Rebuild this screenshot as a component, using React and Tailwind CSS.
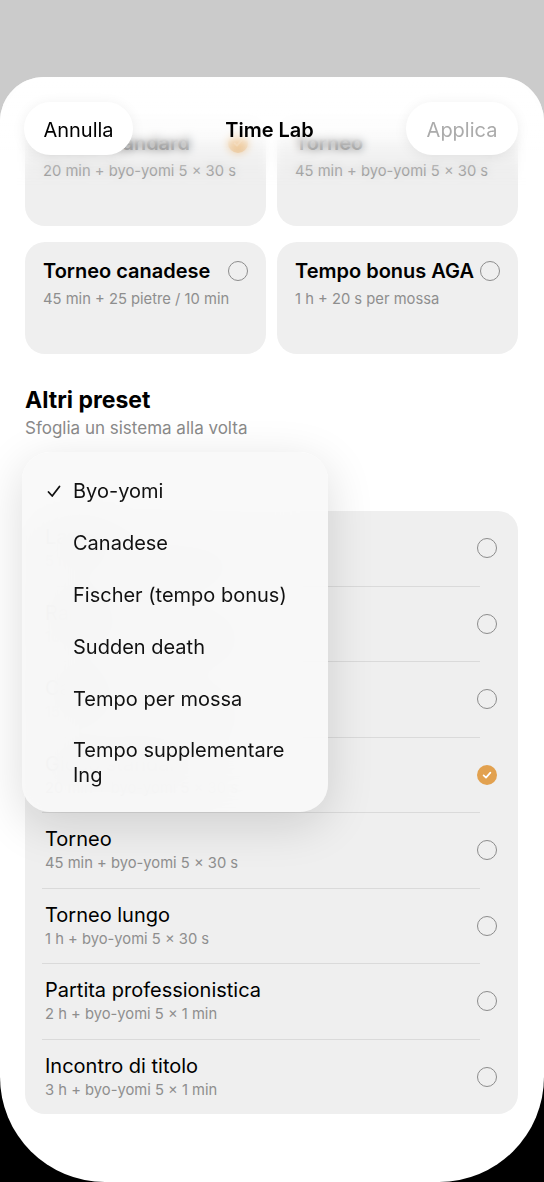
import React from "react";

function Radio({ on }) {
  if (on) {
    return (
      <div className="w-[20px] h-[20px] rounded-full bg-[#e2a14f] flex items-center justify-center shrink-0">
        <svg width="12" height="12" viewBox="0 0 12 12" fill="none">
          <path d="M2.6 6.3 L5 8.6 L9.4 3.6" stroke="white" strokeWidth="1.7" strokeLinecap="round" strokeLinejoin="round" />
        </svg>
      </div>
    );
  }
  return <div className="w-[20px] h-[20px] rounded-full border-[1.5px] border-[#8c8c8c] shrink-0" />;
}

function Card({ title, sub, on }) {
  return (
    <div className="h-[112px] rounded-[20px] bg-[#efefef] pl-[18px] pr-[18px] pt-[17px]">
      <div className="flex items-center justify-between h-[24px]">
        <div className="text-[20px] leading-[24px] font-semibold text-black">{title}</div>
        <Radio on={on} />
      </div>
      <div className="mt-[6px] text-[14.75px] leading-[20px] text-[#8e8e8e]">{sub}</div>
    </div>
  );
}

const rows = [
  ["Lampo", "5 min + byo-yomi 3 × 10 s", false],
  ["Rapida", "10 min + byo-yomi 3 × 20 s", false],
  ["Casual", "15 min + byo-yomi 5 × 20 s", false],
  ["Gioco standard", "20 min + byo-yomi 5 × 30 s", true],
  ["Torneo", "45 min + byo-yomi 5 × 30 s", false],
  ["Torneo lungo", "1 h + byo-yomi 5 × 30 s", false],
  ["Partita professionistica", "2 h + byo-yomi 5 × 1 min", false],
  ["Incontro di titolo", "3 h + byo-yomi 5 × 1 min", false],
];

const menu = ["Byo-yomi", "Canadese", "Fischer (tempo bonus)", "Sudden death", "Tempo per mossa"];

export default function App() {
  return (
    <div
      className="w-[544px] h-[1182px] overflow-hidden bg-[linear-gradient(to_bottom,#cbcbcb_50%,#000_50%)] text-black"
      style={{ fontFamily: "Inter, 'Noto Sans', sans-serif" }}
    >
      <div className="h-[77px]" />
      <div className="relative h-[1105px] bg-white rounded-t-[44px] rounded-b-[105px] overflow-hidden">
        <div className="pl-[25px] pr-[26px] pt-[37px]">
          <div className="grid grid-cols-2 gap-x-[11px] gap-y-[16px]">
            <Card title="Gioco standard" sub="20 min + byo-yomi 5 × 30 s" on />
            <Card title="Torneo" sub="45 min + byo-yomi 5 × 30 s" />
            <Card title="Torneo canadese" sub="45 min + 25 pietre / 10 min" />
            <Card title="Tempo bonus AGA" sub="1 h + 20 s per mossa" />
          </div>

          <div className="mt-[32px] text-[23px] leading-[28px] font-bold">Altri preset</div>
          <div className="mt-[3px] text-[17px] leading-[22px] text-[#8a8a8a]">Sfoglia un sistema alla volta</div>

          <div className="relative mt-[72px]">
            <div className="rounded-[20px] bg-[#efefef] flex flex-col">
              {rows.map(([t, s, on], i) => (
                <div key={t}>
                  <div className="h-[74.5px] flex items-center justify-between pl-[20px] pr-[21px]">
                    <div className="flex flex-col">
                      <div className="text-[20px] leading-[24px] text-black">{t}</div>
                      <div className="mt-[2px] text-[14.75px] leading-[20px] text-[#8e8e8e]">{s}</div>
                    </div>
                    <Radio on={on} />
                  </div>
                  {i < rows.length - 1 && <div className="h-px bg-[#dadada] ml-[17px] mr-[38px]" />}
                </div>
              ))}
            </div>

            <div className="absolute left-[-3px] top-[-59px] w-[306px] rounded-[28px] bg-[#f8f8f8]/90 backdrop-blur-xl shadow-[0_12px_48px_rgba(0,0,0,0.14)] pt-[13px] pb-[12px]">
              {menu.map((m, i) => (
                <div key={m} className="h-[52px] flex items-center pl-[25px] text-[20px] text-[#111]">
                  <span className="w-[26px] flex items-center">
                    {i === 0 && (
                      <svg width="14" height="13" viewBox="0 0 14 13" fill="none">
                        <path d="M1.5 7 L5.2 11 L12.5 1.5" stroke="#111" strokeWidth="1.8" strokeLinecap="round" strokeLinejoin="round" />
                      </svg>
                    )}
                  </span>
                  <span>{m}</span>
                </div>
              ))}
              <div className="flex pl-[25px] pt-[13px] pb-[12px] text-[20px] leading-[25px] text-[#111]">
                <span className="w-[26px]" />
                <span>Tempo supplementare<br />Ing</span>
              </div>
            </div>
          </div>
        </div>

        <div className="absolute inset-x-0 top-0 h-[110px] bg-[linear-gradient(to_bottom,rgba(255,255,255,0.97)_0%,rgba(255,255,255,0.85)_45%,rgba(255,255,255,0)_100%)] backdrop-blur-[4px] [mask-image:linear-gradient(to_bottom,black_55%,transparent_100%)]" />
        <div className="absolute inset-x-0 top-[25px] flex items-center justify-between pl-[24px] pr-[26px] h-[53px]">
          <div className="h-[53px] w-[109px] rounded-full bg-white shadow-[0_2px_14px_rgba(0,0,0,0.07)] flex items-center justify-center pt-[2px] text-[20px] text-black">Annulla</div>
          <div className="text-[20px] font-semibold pt-[2px]">Time Lab</div>
          <div className="h-[53px] w-[112px] rounded-full bg-white shadow-[0_2px_14px_rgba(0,0,0,0.07)] flex items-center justify-center pt-[2px] text-[20px] text-[#ababab]">Applica</div>
        </div>
      </div>
    </div>
  );
}
